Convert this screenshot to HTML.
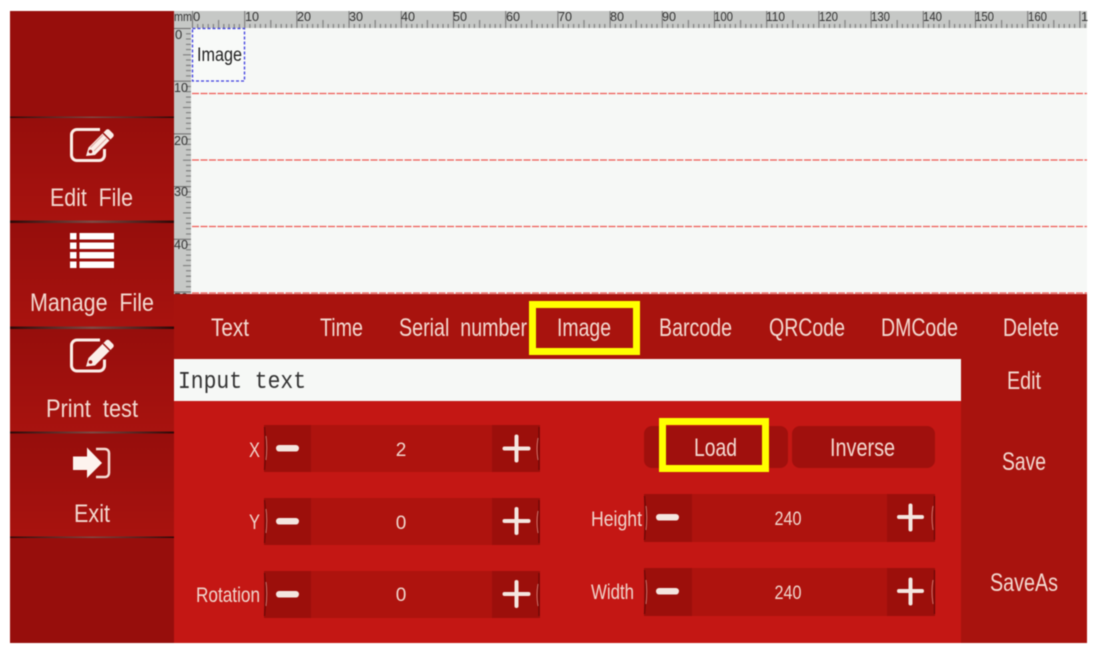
<!DOCTYPE html>
<html><head><meta charset="utf-8"><title>Image editor</title>
<style>
html,body{margin:0;padding:0;background:#fff;width:1100px;height:654px;overflow:hidden}
svg{display:block;filter:blur(.4px)}
text{font-family:"Liberation Sans",sans-serif;white-space:pre}
.l{font-size:25px;fill:#f3d9d0}
.s{font-size:21px;fill:#f0d5cc}
.v{font-size:19px;fill:#f0d5cc;text-anchor:middle}
.r{font-size:13px;fill:#333}
</style></head><body>
<svg width="1100" height="654" viewBox="0 0 1100 654" xmlns="http://www.w3.org/2000/svg">
<defs>
<linearGradient id="dv" x1="0" x2="1" y1="0" y2="0"><stop offset="0" stop-color="#2e0706"/><stop offset=".5" stop-color="#7d4a44"/><stop offset="1" stop-color="#2e0706"/></linearGradient>
<linearGradient id="sec" x1="0" x2="0" y1="0" y2="1"><stop offset="0" stop-color="#960e0c"/><stop offset="1" stop-color="#a8130f"/></linearGradient>
<pattern id="tx" x="192" y="0" width="52.2" height="30" patternUnits="userSpaceOnUse">
<path d="M.5 11V28M5.7 24V28M11 24V28M16.2 24V28M21.4 24V28M26.600 20V28M31.800 24V28M37 24V28M42.200 24V28M47.400 24V28" stroke="#6a6a6a" stroke-width=".9" fill="none"/></pattern>
<pattern id="ty" x="174" y="28" width="30" height="52.7" patternUnits="userSpaceOnUse">
<path d="M0 .5H17M12 5.8H17M12 11H17M12 16.300H17M12 21.600H17M9 26.800H17M12 32H17M12 37.400H17M12 42.600H17M12 47.900H17" stroke="#6a6a6a" stroke-width=".9" fill="none"/></pattern>
</defs>

<!-- sidebar -->
<rect x="10" y="11" width="164" height="632" fill="#970e0c"/>
<rect x="10" y="117" width="164" height="104" fill="url(#sec)"/>
<rect x="10" y="222" width="164" height="105" fill="url(#sec)"/>
<rect x="10" y="328" width="164" height="104" fill="url(#sec)"/>
<rect x="10" y="433" width="164" height="104" fill="url(#sec)"/>
<rect x="10" y="116.500" width="164" height="1.500" fill="url(#dv)"/>
<rect x="10" y="220.500" width="164" height="2.500" fill="url(#dv)"/>
<rect x="10" y="326.500" width="164" height="2.500" fill="url(#dv)"/>
<rect x="10" y="431.500" width="164" height="2" fill="url(#dv)"/>
<rect x="10" y="536.500" width="164" height="1.500" fill="url(#dv)"/>

<!-- edit icon -->
<g>
<path d="M100 129.500H77a5.500 5.500 0 0 0-5.500 5.500V155a5.500 5.500 0 0 0 5.500 5.500H99a5.500 5.500 0 0 0 5.500-5.500V149" fill="none" stroke="#fbeee8" stroke-width="3"/>
<path d="M86 156l2.500-8.500L106 130a2.500 2.500 0 0 1 3.500 0l3.500 3.500a2.500 2.500 0 0 1 0 3.500L95 155z" fill="#fbeee8"/>
<path d="M103 133l7 7" stroke="#970e0c" stroke-width="1.500"/>
<path d="M90.500 147.500L103 135M94 151L106.500 138.500" stroke="#e0a9a2" stroke-width="1"/>
<circle cx="90.500" cy="151.500" r="1.800" fill="#970e0c"/>
</g>
<g transform="translate(0,210.500)">
<path d="M100 129.500H77a5.500 5.500 0 0 0-5.500 5.500V155a5.500 5.500 0 0 0 5.500 5.500H99a5.500 5.500 0 0 0 5.500-5.500V149" fill="none" stroke="#fbeee8" stroke-width="3"/>
<path d="M86 156l2.500-8.500L106 130a2.500 2.500 0 0 1 3.500 0l3.500 3.500a2.500 2.500 0 0 1 0 3.500L95 155z" fill="#fbeee8"/>
<path d="M103 133l7 7" stroke="#9c100d" stroke-width="1.500"/>
<circle cx="90.500" cy="151.500" r="1.800" fill="#9c100d"/>
</g>
<!-- list icon -->
<g fill="#fff">
<rect x="70" y="233" width="6.500" height="6.500"/><rect x="79.500" y="233" width="34.500" height="6.500"/>
<rect x="70" y="242.500" width="6.500" height="6.500"/><rect x="79.500" y="242.500" width="34.500" height="6.500"/>
<rect x="70" y="252" width="6.500" height="6.500"/><rect x="79.500" y="252" width="34.500" height="6.500"/>
<rect x="70" y="261.500" width="6.500" height="6.500"/><rect x="79.500" y="261.500" width="34.500" height="6.500"/>
</g>
<!-- exit icon -->
<path d="M73 456.500H87V447.500L102 463L87 478V470H73z" fill="#fdf3ee"/>
<path d="M96 449H105a4 4 0 0 1 4 4V473a4 4 0 0 1-4 4H96" fill="none" stroke="#f5dcd4" stroke-width="2.500"/>

<text class="l" x="50" y="206" textLength="83" lengthAdjust="spacingAndGlyphs">Edit  File</text>
<text class="l" x="30" y="311" textLength="124" lengthAdjust="spacingAndGlyphs">Manage  File</text>
<text class="l" x="46" y="417" textLength="92" lengthAdjust="spacingAndGlyphs">Print  test</text>
<text class="l" x="74" y="522" textLength="36" lengthAdjust="spacingAndGlyphs">Exit</text>

<!-- rulers & canvas -->
<rect x="174" y="11" width="913" height="17" fill="#c6c8c6"/>
<rect x="174" y="28" width="17" height="266" fill="#c6c8c6"/>
<rect x="192" y="11" width="895" height="17" fill="url(#tx)"/>
<rect x="174" y="28" width="17" height="266" fill="url(#ty)"/>
<rect x="191" y="28" width="896" height="266" fill="#f6f8f6"/>
<g>
<text class="r" x="174" y="21" textLength="18" lengthAdjust="spacingAndGlyphs">mm</text>
<text class="r" x="193" y="21">0</text><text class="r" x="245" y="21" textLength="14" lengthAdjust="spacingAndGlyphs">10</text><text class="r" x="297" y="21" textLength="14" lengthAdjust="spacingAndGlyphs">20</text><text class="r" x="349" y="21" textLength="14" lengthAdjust="spacingAndGlyphs">30</text><text class="r" x="401" y="21" textLength="14" lengthAdjust="spacingAndGlyphs">40</text><text class="r" x="453" y="21" textLength="14" lengthAdjust="spacingAndGlyphs">50</text><text class="r" x="506" y="21" textLength="14" lengthAdjust="spacingAndGlyphs">60</text><text class="r" x="558" y="21" textLength="14" lengthAdjust="spacingAndGlyphs">70</text><text class="r" x="610" y="21" textLength="14" lengthAdjust="spacingAndGlyphs">80</text><text class="r" x="662" y="21" textLength="14" lengthAdjust="spacingAndGlyphs">90</text>
<text class="r" x="714" y="21" textLength="19" lengthAdjust="spacingAndGlyphs">100</text><text class="r" x="766" y="21" textLength="19" lengthAdjust="spacingAndGlyphs">110</text><text class="r" x="819" y="21" textLength="19" lengthAdjust="spacingAndGlyphs">120</text><text class="r" x="871" y="21" textLength="19" lengthAdjust="spacingAndGlyphs">130</text><text class="r" x="923" y="21" textLength="19" lengthAdjust="spacingAndGlyphs">140</text><text class="r" x="975" y="21" textLength="19" lengthAdjust="spacingAndGlyphs">150</text><text class="r" x="1028" y="21" textLength="19" lengthAdjust="spacingAndGlyphs">160</text><text class="r" x="1081" y="21">1</text>
<text class="r" x="175" y="39">0</text><text class="r" x="174" y="92" textLength="14" lengthAdjust="spacingAndGlyphs">10</text><text class="r" x="174" y="145" textLength="14" lengthAdjust="spacingAndGlyphs">20</text><text class="r" x="174" y="196" textLength="14" lengthAdjust="spacingAndGlyphs">30</text><text class="r" x="174" y="249" textLength="14" lengthAdjust="spacingAndGlyphs">40</text><text class="r" x="174" y="302" textLength="14" lengthAdjust="spacingAndGlyphs">50</text>
</g>
<path d="M192 93.500H1087M192 160H1087M192 226.500H1087M192 293H1087" stroke="#ee5a55" stroke-width="1.300" stroke-dasharray="7 1.500" fill="none"/>
<rect x="192.500" y="28.500" width="52" height="52.500" fill="#f8faf8" stroke="#3a3ae0" stroke-width="1.300" stroke-dasharray="3 2"/>
<text x="197" y="61" font-size="19" fill="#222" textLength="45" lengthAdjust="spacingAndGlyphs">Image</text>

<!-- tabs band -->
<rect x="174" y="294" width="913" height="65" fill="#a8130e"/>
<rect x="961" y="294" width="126" height="349" fill="#a8130e"/>
<rect x="174" y="401" width="787" height="242" fill="#c41714"/>
<rect x="174" y="359" width="787" height="42" rx="1.500" fill="#f6f8f6"/>
<text x="178" y="388" font-size="24" fill="#333" style="font-family:'Liberation Mono',monospace" textLength="128" lengthAdjust="spacingAndGlyphs">Input text</text>

<text class="l" x="211" y="336" textLength="38" lengthAdjust="spacingAndGlyphs">Text</text>
<text class="l" x="320" y="336" textLength="43" lengthAdjust="spacingAndGlyphs">Time</text>
<text class="l" x="399" y="336" textLength="128" lengthAdjust="spacingAndGlyphs">Serial  number</text>
<text class="l" x="557" y="336" textLength="54" lengthAdjust="spacingAndGlyphs">Image</text>
<text class="l" x="659" y="336" textLength="73" lengthAdjust="spacingAndGlyphs">Barcode</text>
<text class="l" x="769" y="336" textLength="76" lengthAdjust="spacingAndGlyphs">QRCode</text>
<text class="l" x="881" y="336" textLength="77" lengthAdjust="spacingAndGlyphs">DMCode</text>
<text class="l" x="1003" y="336" textLength="56" lengthAdjust="spacingAndGlyphs">Delete</text>
<text class="l" x="1007" y="389" textLength="34" lengthAdjust="spacingAndGlyphs">Edit</text>
<text class="l" x="1002" y="470" textLength="44" lengthAdjust="spacingAndGlyphs">Save</text>
<text class="l" x="990" y="591" textLength="68" lengthAdjust="spacingAndGlyphs">SaveAs</text>

<!-- labels -->
<text class="s" x="249" y="457" textLength="11" lengthAdjust="spacingAndGlyphs">X</text>
<text class="s" x="249" y="529" textLength="11" lengthAdjust="spacingAndGlyphs">Y</text>
<text class="s" x="196" y="602" textLength="64" lengthAdjust="spacingAndGlyphs">Rotation</text>
<text class="s" x="591" y="526" textLength="51" lengthAdjust="spacingAndGlyphs">Height</text>
<text class="s" x="591" y="599" textLength="43" lengthAdjust="spacingAndGlyphs">Width</text>

<!-- steppers left -->
<g>
<rect x="264" y="425" width="276" height="47" fill="#ae130e"/>
<rect x="264" y="425" width="47" height="47" fill="#9c0f0b"/><rect x="492" y="425" width="48" height="47" fill="#9c0f0b"/>
<rect x="276" y="445" width="23" height="6.500" rx="3.200" fill="#f4e6e0"/>
<path d="M504.500 448.500H528.500M516.500 436.500V460.500" stroke="#f4e6e0" stroke-width="4" stroke-linecap="round"/>
<path d="M264.500 427q2 21 0 43M539 427v43" stroke="#6a0806" stroke-width="1.200" fill="none"/>
<path d="M266 436q1.500 11 0 24M538 438q-2 11 0 22" stroke="#d98a80" stroke-width=".8" fill="none"/>
</g>
<g>
<rect x="264" y="498" width="276" height="47" fill="#ae130e"/>
<rect x="264" y="498" width="47" height="47" fill="#9c0f0b"/><rect x="492" y="498" width="48" height="47" fill="#9c0f0b"/>
<rect x="276" y="518" width="23" height="6.500" rx="3.200" fill="#f4e6e0"/>
<path d="M504.500 521H528.500M516.500 509V533" stroke="#f4e6e0" stroke-width="4" stroke-linecap="round"/>
<path d="M264.500 500q2 21 0 43M539 500v43" stroke="#6a0806" stroke-width="1.200" fill="none"/>
<path d="M266 509q1.500 11 0 24M538 511q-2 11 0 22" stroke="#d98a80" stroke-width=".8" fill="none"/>
</g>
<g>
<rect x="264" y="571" width="276" height="47" fill="#ae130e"/>
<rect x="264" y="571" width="47" height="47" fill="#9c0f0b"/><rect x="492" y="571" width="48" height="47" fill="#9c0f0b"/>
<rect x="276" y="591" width="23" height="6.500" rx="3.200" fill="#f4e6e0"/>
<path d="M504.500 594H528.500M516.500 582V606" stroke="#f4e6e0" stroke-width="4" stroke-linecap="round"/>
<path d="M264.500 573q2 21 0 43M539 573v43" stroke="#6a0806" stroke-width="1.200" fill="none"/>
<path d="M266 582q1.500 11 0 24M538 584q-2 11 0 22" stroke="#d98a80" stroke-width=".8" fill="none"/>
</g>
<text class="v" x="401" y="456">2</text><text class="v" x="401" y="529">0</text><text class="v" x="401" y="601">0</text>

<!-- buttons -->
<rect x="644" y="426" width="144" height="42" rx="8" fill="#a0100d"/>
<rect x="792" y="426" width="143" height="42" rx="8" fill="#a0100d"/>
<text class="l" x="694" y="456" textLength="43" lengthAdjust="spacingAndGlyphs">Load</text>
<text class="l" x="830" y="456" textLength="65" lengthAdjust="spacingAndGlyphs">Inverse</text>

<!-- steppers right -->
<g>
<rect x="644" y="494" width="291" height="48" fill="#ae130e"/>
<rect x="644" y="494" width="48" height="48" fill="#9c0f0b"/><rect x="887" y="494" width="48" height="48" fill="#9c0f0b"/>
<rect x="656" y="514" width="23" height="6.500" rx="3.200" fill="#f4e6e0"/>
<path d="M899 517H922M910.500 505.500V529.500" stroke="#f4e6e0" stroke-width="4" stroke-linecap="round"/>
<path d="M644.500 496q2 21 0 44M934.500 496v44" stroke="#6a0806" stroke-width="1.200" fill="none"/>
<path d="M646 506q1.500 11 0 24M933 506q-2 11 0 24" stroke="#d98a80" stroke-width=".8" fill="none"/>
<text class="v" x="788" y="525" textLength="27" lengthAdjust="spacingAndGlyphs">240</text>
</g>
<g>
<rect x="644" y="568" width="291" height="48" fill="#ae130e"/>
<rect x="644" y="568" width="48" height="48" fill="#9c0f0b"/><rect x="887" y="568" width="48" height="48" fill="#9c0f0b"/>
<rect x="656" y="588" width="23" height="6.500" rx="3.200" fill="#f4e6e0"/>
<path d="M899 591H922M910.500 579.500V603.500" stroke="#f4e6e0" stroke-width="4" stroke-linecap="round"/>
<path d="M644.500 570q2 21 0 44M934.500 570v44" stroke="#6a0806" stroke-width="1.200" fill="none"/>
<path d="M646 580q1.500 11 0 24M933 580q-2 11 0 24" stroke="#d98a80" stroke-width=".8" fill="none"/>
<text class="v" x="788" y="599" textLength="27" lengthAdjust="spacingAndGlyphs">240</text>
</g>

<!-- yellow highlights -->
<rect x="532.500" y="304.500" width="104" height="47" fill="none" stroke="#ffff00" stroke-width="7"/>
<rect x="662.500" y="421.500" width="103" height="47" fill="none" stroke="#ffff00" stroke-width="7"/>
</svg>
</body></html>
